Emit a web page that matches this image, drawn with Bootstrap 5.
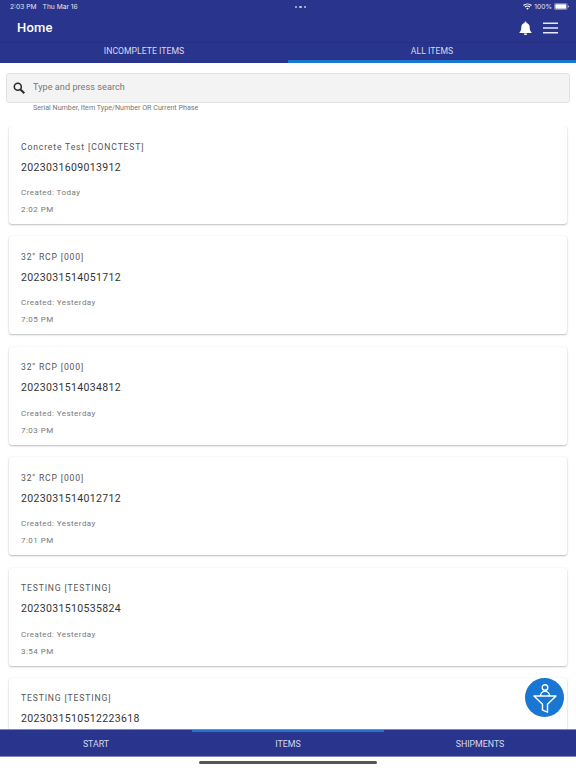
<!DOCTYPE html>
<html lang="en">
<head>
  <meta charset="UTF-8">
  <meta name="viewport" content="width=device-width, initial-scale=1.0">
  <title>Home</title>
  <link href="https://cdn.jsdelivr.net/npm/bootstrap@5.3.3/dist/css/bootstrap.min.css" rel="stylesheet">
  <style>
    html, body { height: 768px; overflow: hidden; }
    body { font-family: Roboto, "Liberation Sans", sans-serif; background: #fff; color: #333; position: relative; }
    .top-bar { background: #29358c; color: #fff; height: 63px; }
    .status-row { height: 14px; font-family: Inter, Roboto, sans-serif; font-size: 6.7px; padding: 0 7px 0 10px; color: #e3e5f3; }
    .dots { gap: 2px; }
    .dots i { display: block; width: 2.5px; height: 2.5px; border-radius: 50%; background: #c3c7e3; }
    .title-row { height: 28px; padding: 0 18px 0 17px; }
    .title-row h1 { font-size: 13px; font-weight: 500; margin: 0; letter-spacing: .2px; }
    .top-tabs { height: 21px; border-top: 1px solid #253080; }
    .tab-item { flex: 1 1 0; text-align: center; font-size: 8.7px; color: #d5d8ec; line-height: 17px; }
    .tab-item.on { border-bottom: 3px solid #1976d2; height: 20px; align-self: flex-end; }
    .search-wrap { padding: 10px 6px 0; }
    .search-box { height: 30px; background: #f3f3f3; border: 1px solid #e2e2e2; border-radius: 3px; padding-left: 5px; gap: 7px; font-size: 9.1px; color: #777; letter-spacing: .05px; }
    .hint { font-size: 7.15px; color: #777; padding-left: 33px; line-height: 9px; height: 23px; }
    .item-list { padding: 0 9px; gap: 12.4px; flex: 1 1 0; overflow: hidden; min-height: 0; }
    .item-card { flex: 0 0 98px; height: 98px; border: 0; border-radius: 3px; background: #fff; padding: 14.5px 12px 0; box-shadow: 0 1px 2px rgba(0,0,0,.25), 0 0 2px rgba(0,0,0,.05); }
    .item-name { font-size: 8.6px; color: #555; letter-spacing: .85px; line-height: 12px; }
    .item-serial { font-size: 10.5px; color: #333; letter-spacing: .35px; line-height: 14px; margin-top: 8px; }
    .item-meta { font-size: 8px; color: #777; letter-spacing: .45px; line-height: 10px; margin-top: 13.5px; }
    .item-meta + .item-meta { margin-top: 7px; }
    .fab { position: absolute; left: 525px; top: 678px; width: 39px; height: 39px; border-radius: 50%; background: #1976d2; }
    .bottom-nav { height: 28px; flex: 0 0 28px; background: #29358c; border-top: 1px solid #8187bd; border-bottom: 1px solid #8187bd; }
    .nav-item-b { flex: 1 1 0; text-align: center; font-size: 8.8px; color: #d5d8ec; line-height: 28px; }
    .nav-item-b.on { box-shadow: inset 0 2px 0 #1976d2; }
    .home-strip { height: 11px; flex: 0 0 11px; background: #fff; padding-top: 4px; }
    .home-bar { width: 178px; height: 3px; border-radius: 2px; background: #555; }
  </style>
</head>
<body class="d-flex flex-column">
  <header class="top-bar flex-shrink-0">
    <div class="status-row d-flex align-items-center justify-content-between">
      <div class="d-flex" style="gap:6px"><span>2:03 PM</span><span>Thu Mar 16</span></div>
      <div class="dots d-flex"><i></i><i></i><i></i></div>
      <div class="d-flex align-items-center" style="gap:2px">
        <svg width="9" height="7" viewBox="0 0 18 14"><path d="M1 5a12 12 0 0 1 16 0M4 8a8 8 0 0 1 10 0" fill="none" stroke="#fff" stroke-width="2.2"/><path d="M6.5 10.5a4 4 0 0 1 5 0L9 13.5z" fill="#fff"/></svg>
        <span>100%</span>
        <svg width="15" height="7" viewBox="0 0 30 14"><rect x=".7" y=".7" width="25.6" height="12.6" rx="3" fill="none" stroke="#c3c7e3" stroke-width="1.2"/><rect x="2.5" y="2.5" width="22" height="9" rx="1.5" fill="#fff"/><path d="M28 5v4a2 2 0 0 0 0-4z" fill="#c3c7e3"/></svg>
      </div>
    </div>
    <div class="title-row d-flex align-items-center justify-content-between">
      <h1>Home</h1>
      <div class="d-flex align-items-center" style="gap:11px">
        <svg width="13" height="14" viewBox="0 0 13 14"><path d="M6.5 0.6a1 1 0 0 1 1 1v.5c2 .5 3.2 2.2 3.2 4.3 0 2.6.6 3.6 1.8 4.8v.9H.5v-.9c1.200-1.200 1.800-2.200 1.800-4.800 0-2.100 1.200-3.800 3.200-4.300v-.5a1 1 0 0 1 1-1z" fill="#fff"/><path d="M4.800 12.400h3.400a1.700 1.500 0 0 1-3.400 0z" fill="#fff"/></svg>
        <svg width="15" height="12" viewBox="0 0 15 12"><path d="M0 1.200h15M0 6h15M0 10.800h15" stroke="#e8e9f5" stroke-width="1.500"/></svg>
      </div>
    </div>
    <div class="top-tabs d-flex">
      <div class="tab-item">INCOMPLETE ITEMS</div>
      <div class="tab-item on">ALL ITEMS</div>
    </div>
  </header>

  <div class="search-wrap flex-shrink-0">
    <div class="search-box d-flex align-items-center">
      <svg width="14" height="14" viewBox="0 0 14 14"><circle cx="5.800" cy="5.800" r="3.500" fill="none" stroke="#2b2b2b" stroke-width="1.600"/><path d="M8.500 8.500l3.800 3.800" stroke="#2b2b2b" stroke-width="2"/></svg>
      <span>Type and press search</span>
    </div>
  </div>
  <div class="hint flex-shrink-0">Serial Number, Item Type/Number OR Current Phase</div>

  <main class="item-list d-flex flex-column" id="items"></main>

  <nav class="bottom-nav d-flex">
    <div class="nav-item-b">START</div>
    <div class="nav-item-b on">ITEMS</div>
    <div class="nav-item-b">SHIPMENTS</div>
  </nav>
  <div class="home-strip d-flex justify-content-center"><div class="home-bar"></div></div>

  <div class="fab d-flex align-items-center justify-content-center">
    <svg width="24" height="30" viewBox="0 0 24 30" fill="none" stroke="#fff" stroke-width="1.400" stroke-linejoin="round">
      <circle cx="12" cy="4.500" r="2.800"/>
      <path d="M7.500 13c0-2.600 2-4.800 4.500-4.800s4.500 2.200 4.500 4.800"/>
      <path d="M1 13h22l-8.500 8.200v8l-5-2v-6z"/>
    </svg>
  </div>

  <script>
    const items = [
      ['Concrete Test [CONCTEST]', '2023031609013912', 'Created: Today', '2:02 PM'],
      ['32" RCP [000]', '2023031514051712', 'Created: Yesterday', '7:05 PM'],
      ['32" RCP [000]', '2023031514034812', 'Created: Yesterday', '7:03 PM'],
      ['32" RCP [000]', '2023031514012712', 'Created: Yesterday', '7:01 PM'],
      ['TESTING [TESTING]', '2023031510535824', 'Created: Yesterday', '3:54 PM'],
      ['TESTING [TESTING]', '2023031510512223618']
    ];
    const cont = document.getElementById('items');
    items.forEach(it => {
      const c = document.createElement('div');
      c.className = 'item-card card';
      c.innerHTML = `
        <div class="item-name">${it[0]}</div>
        <div class="item-serial">${it[1]}</div>
        ${it.slice(2).map(t => `<div class="item-meta">${t}</div>`).join('')}`;
      cont.appendChild(c);
    });
  </script>
  <script src="https://cdn.jsdelivr.net/npm/bootstrap@5.3.3/dist/js/bootstrap.bundle.min.js"></script>
</body>
</html>
